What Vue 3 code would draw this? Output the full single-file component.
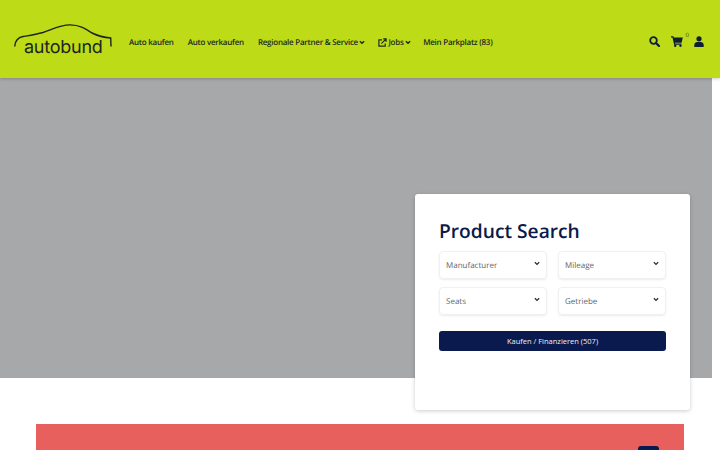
<template>
  <div class="page">
    <header class="header">
      <a class="logo">
        <svg class="car" width="98" height="23" viewBox="0 0 98 23" fill="none">
          <path d="M0.8 22 C1.2 17 4 13.5 9 12.5 C15 11.5 22 10.5 29 8.5 C38 5.5 46 0.9 56 0.9 C66 0.9 72 5 78 9 C84 12 90 13.5 96.7 14 L97 22" stroke="#1c2420" stroke-width="1.4" stroke-linecap="round" />
        </svg>
        <span class="logo-text">autobund</span>
      </a>
      <nav class="nav">
        <a>Auto kaufen</a>
        <a>Auto verkaufen</a>
        <a class="partner">Regionale Partner &amp; Service
          <svg width="6" height="5" viewBox="0 0 7 5"><path d="M1 1 L3.5 3.5 L6 1" fill="none" stroke="#1c2a20" stroke-width="1.6" /></svg>
        </a>
        <a class="jobs">
          <svg width="9" height="9" viewBox="0 0 10 10" fill="none" stroke="#1c2a20" stroke-width="1.3">
            <path d="M8 6 V9 H1 V2 H4.5" />
            <path d="M3.8 6.2 L8.5 1.5 M5.8 1 H9 V4.2" />
          </svg>
          Jobs
          <svg width="6" height="5" viewBox="0 0 7 5"><path d="M1 1 L3.5 3.5 L6 1" fill="none" stroke="#1c2a20" stroke-width="1.6" /></svg>
        </a>
        <a>Mein Parkplatz (83)</a>
      </nav>
      <div class="tools">
        <svg width="11" height="11" viewBox="0 0 11 11" fill="none" stroke="#0d1f33" stroke-width="1.8">
          <circle cx="4.5" cy="4.5" r="3.3" />
          <path d="M7 7 L10 10" stroke-linecap="round" stroke-width="2.2" />
        </svg>
        <span class="cart">
          <svg width="12" height="11" viewBox="0 0 12 11" fill="#0d1f33">
            <path d="M0 0.3 H2.4 L2.8 1.6 H11.8 L10.6 6.8 H4 L4.2 7.6 H10.4 V8.8 H3.1 L1.5 1.5 H0 Z" />
            <circle cx="4.2" cy="9.8" r="1.2" />
            <circle cx="9.5" cy="9.8" r="1.2" />
          </svg>
          <span class="badge">0</span>
        </span>
        <svg width="10" height="11" viewBox="0 0 10 11" fill="#0d1f33">
          <circle cx="5" cy="2.8" r="2.6" />
          <path d="M0.3 11 V9 C0.3 7 1.8 6 3.3 6 H6.7 C8.2 6 9.7 7 9.7 9 V11 Z" />
        </svg>
      </div>
    </header>

    <section class="hero">
      <div class="card">
        <h2>Product Search</h2>
        <div class="fields">
          <div v-for="f in fields" :key="f" class="select">
            <span>{{ f }}</span>
            <svg width="6" height="5" viewBox="0 0 7 5"><path d="M1 1 L3.5 3.5 L6 1" fill="none" stroke="#2b2f36" stroke-width="1.5" /></svg>
          </div>
        </div>
        <button class="submit">Kaufen / Finanzieren (507)</button>
      </div>
    </section>

    <section class="banner">
      <span class="banner-btn"></span>
    </section>
  </div>
</template>

<script setup>
const fields = ['Manufacturer', 'Mileage', 'Seats', 'Getriebe']
</script>

<style>
html, body {
  overflow: hidden;
  background: #fff;
}
</style>

<style scoped>
.page {
  width: 720px;
  height: 450px;
  overflow: hidden;
  font-family: "Open Sans", "Liberation Sans", sans-serif;
  text-rendering: geometricPrecision;
}

.header {
  height: 78px;
  box-sizing: border-box;
  padding: 4px 16px 0 14px;
  background: #bedb18;
  display: flex;
  align-items: center;
  box-shadow: 0 1px 3px rgba(0, 0, 0, 0.2);
  position: relative;
  z-index: 2;
}

.logo {
  width: 98px;
  height: 32px;
  margin: -3px 17px 0 0;
  position: relative;
  flex: none;
}

.car {
  position: absolute;
  left: 0;
  top: 0;
}

.logo-text {
  position: absolute;
  left: 10px;
  top: 14px;
  font-family: Inter, sans-serif;
  font-size: 18px;
  line-height: 20px;
  font-weight: 400;
  letter-spacing: -0.25px;
  color: #1c2420;
}

.nav {
  display: flex;
  gap: 14px;
  align-items: center;
  margin-top: 2px;
  font-size: 8px;
  font-weight: 600;
  letter-spacing: -0.25px;
  color: #1c2a20;
  white-space: nowrap;
}

.nav a {
  display: flex;
  align-items: center;
  gap: 1.5px;
}

.nav .partner {
  margin-right: -1px;
}

.nav .jobs {
  gap: 1px;
  margin-right: -1.5px;
}

.tools {
  margin: 0 0 0 auto;
  display: flex;
  align-items: center;
  gap: 11px;
}

.cart {
  position: relative;
  display: flex;
}

.badge {
  position: absolute;
  right: -6px;
  top: -5px;
  font-size: 6px;
  line-height: 8px;
  color: #3a4a20;
}

.hero {
  width: 712px;
  height: 300px;
  background: #a6a8aa;
  position: relative;
}

.card {
  position: absolute;
  left: 415px;
  top: 116px;
  width: 275px;
  height: 216px;
  box-sizing: border-box;
  padding: 23px 24px;
  background: #fff;
  border-radius: 3px;
  box-shadow: 0 1px 4px rgba(0, 0, 0, 0.2);
}

h2 {
  margin: 0 0 7px;
  font-size: 19.2px;
  line-height: 27px;
  font-weight: 600;
  color: #0a1a4a;
}

.fields {
  display: grid;
  grid-template-columns: 108px 108px;
  column-gap: 11px;
  row-gap: 8px;
}

.select {
  height: 28px;
  box-sizing: border-box;
  padding: 0 6px;
  border: 1px solid #f0f0f0;
  border-radius: 4px;
  display: flex;
  align-items: center;
  justify-content: space-between;
  font-size: 8px;
  color: #666;
  box-shadow: 0 1px 2px rgba(0, 0, 0, 0.08);
}

.select svg {
  margin-top: -3px;
}

.submit {
  display: block;
  width: 227px;
  height: 20px;
  margin-top: 16px;
  padding: 0;
  border: 0;
  border-radius: 3px;
  background: #0a1a4e;
  color: #f0f0f0;
  font-family: inherit;
  font-size: 7.5px;
}

.banner {
  width: 648px;
  height: 60px;
  margin: 46px 0 0 36px;
  background: #e8605d;
  position: relative;
}

.banner-btn {
  position: absolute;
  left: 602px;
  top: 22px;
  width: 21px;
  height: 21px;
  border-radius: 3px;
  background: #0a1a4e;
}
</style>
